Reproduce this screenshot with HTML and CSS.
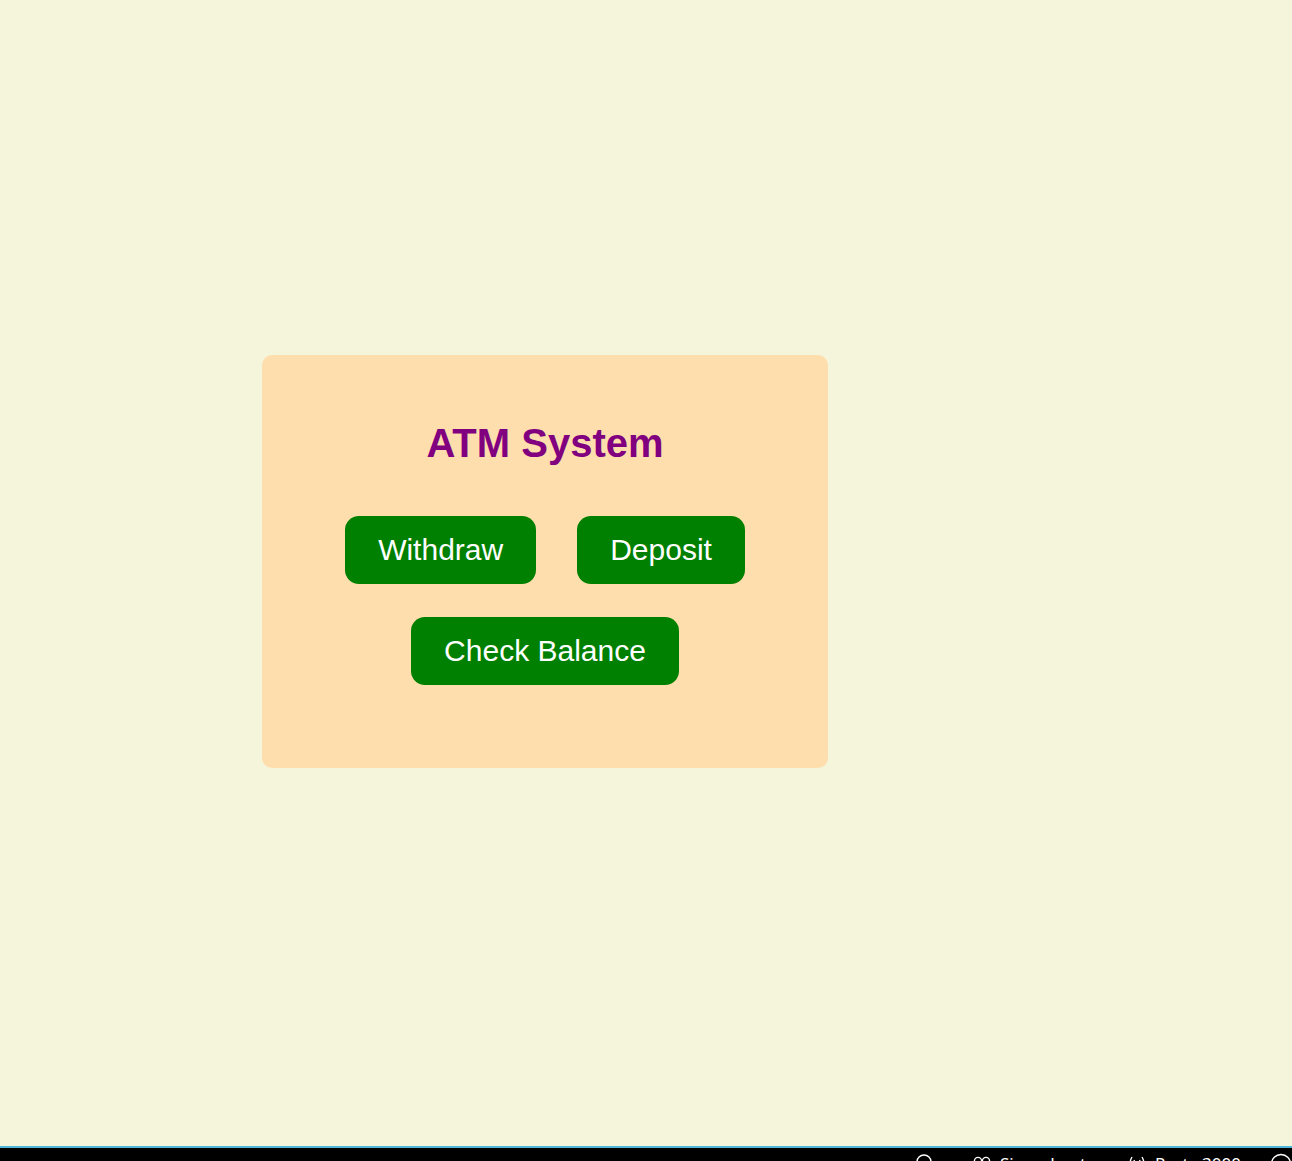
FILE: index.html
```html
<!DOCTYPE html>
<html lang="en">
<head>
<meta charset="utf-8">
<title>ATM System</title>
<link rel="stylesheet" href="styles.css">
</head>
<body>
<main class="page">
  <section class="atm-card">
    <h1 class="atm-title">ATM System</h1>
    <div class="btn-row">
      <button class="atm-btn">Withdraw</button>
      <button class="atm-btn">Deposit</button>
    </div>
    <div class="btn-row">
      <button class="atm-btn">Check Balance</button>
    </div>
  </section>
</main>
<footer class="status-bar">
  <span class="status-item item-search">
    <svg width="16" height="18" viewBox="0 0 16 18"><circle cx="8" cy="9" r="7" fill="none" stroke="#fff" stroke-width="1.4"/></svg>
  </span>
  <span class="status-item item-account">
    <svg width="18" height="18" viewBox="0 0 18 18"><circle cx="5" cy="6" r="3.6" fill="none" stroke="#fff" stroke-width="1.4"/><circle cx="13" cy="6" r="3.6" fill="none" stroke="#fff" stroke-width="1.4"/></svg>
    <span>Signed out</span>
  </span>
  <span class="status-item item-port">
    <svg width="20" height="18" viewBox="0 0 20 18"><path d="M5 2 Q1 9 5 16 M15 2 Q19 9 15 16 M7.5 5 Q5.5 9 7.5 13 M12.5 5 Q14.5 9 12.5 13" fill="none" stroke="#fff" stroke-width="1.4"/><circle cx="10" cy="9" r="1.4" fill="#fff"/></svg>
    <span>Port : 3000</span>
  </span>
  <span class="status-item item-bell">
    <svg width="22" height="18" viewBox="0 0 22 18"><circle cx="11" cy="11" r="9.5" fill="none" stroke="#fff" stroke-width="1.4"/></svg>
  </span>
</footer>
</body>
</html>
```

FILE: styles.css
```css
html, body {
  margin: 0;
  padding: 0;
}

body {
  background: #f5f5dc;
  font-family: "Liberation Sans", Arial, sans-serif;
  height: 100vh;
  display: flex;
  flex-direction: column;
  overflow: hidden;
}

.page {
  flex: 1;
  padding: 355px 0 0 262px;
}

.atm-card {
  width: 566px;
  height: 413px;
  box-sizing: border-box;
  background: #ffdead;
  border-radius: 10px;
  padding-top: 65px;
  display: flex;
  flex-direction: column;
  align-items: center;
}

.atm-title {
  margin: 0 0 50px;
  font-size: 40px;
  line-height: 46px;
  font-weight: bold;
  color: #800080;
}

.btn-row {
  display: flex;
  justify-content: center;
  gap: 41px;
  margin-bottom: 33px;
}

.atm-btn {
  font-family: "Liberation Sans", Arial, sans-serif;
  font-size: 30px;
  line-height: 34px;
  padding: 17px 33px;
  border: none;
  border-radius: 14px;
  background: #008000;
  color: #fff;
  cursor: pointer;
}

.status-bar {
  flex: 0 0 13px;
  height: 13px;
  border-top: 2px solid #4fb6d9;
  background: #000;
  color: #fff;
  font-family: "Noto Sans", "Open Sans", sans-serif;
  font-size: 17px;
  line-height: 22px;
  display: flex;
  align-items: flex-start;
  padding-left: 916px;
  overflow: hidden;
}

.status-item {
  display: flex;
  align-items: center;
  gap: 9px;
  padding-top: 5px;
  white-space: nowrap;
  flex: none;
}

.item-search { width: 57px; }
.item-account { width: 154px; }
.item-port { width: 143px; gap: 8px; }
```
